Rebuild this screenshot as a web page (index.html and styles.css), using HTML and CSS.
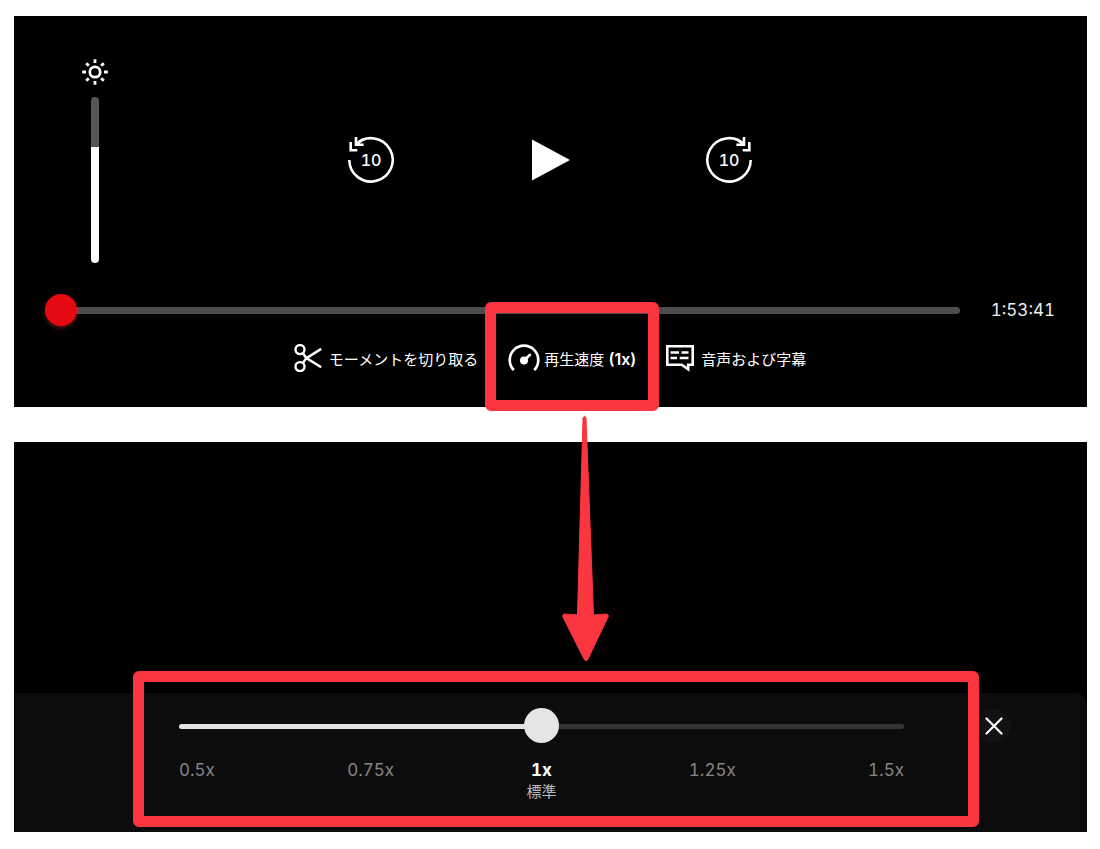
FILE: index.html
```html
<!DOCTYPE html>
<html lang="ja">
<head>
  <meta charset="UTF-8">
  <meta name="viewport" content="width=device-width, initial-scale=1.0">
  <title>再生速度</title>
  <link rel="stylesheet" href="styles.css">
</head>
<body>
  <section class="screen player">
    <div class="stage">
      <div class="brightness">
        <svg class="icon" width="28" height="28" viewBox="0 0 28 28" aria-hidden="true">
          <circle cx="14" cy="14" r="5.2" stroke-width="2.7"/>
          <path d="M14 1.2v3.8M14 23v3.8M1.2 14H5M23 14h3.8M5.2 5.2l2.6 2.6M20.2 20.2l2.6 2.6M22.8 5.2l-2.6 2.6M7.8 20.2l-2.6 2.6" stroke-width="2.8"/>
        </svg>
        <input class="brightness-range" type="range" min="0" max="100" value="70" aria-label="明るさ">
      </div>

      <div class="transport">
        <button class="skip" type="button">
          <svg class="icon" width="48" height="48" viewBox="0 0 48 48" aria-hidden="true">
            <path d="M2.3 24A21.7 21.7 0 1 0 9 8.2" stroke-width="2.6"/>
            <path d="M9 1v7.8h7.6M3.7 6v8.2h6.6M9 8.8L14.5 4.5" stroke-width="2.6"/>
          </svg>
          <span>10</span>
        </button>
        <button class="play" type="button" aria-label="再生">
          <svg width="40" height="42" viewBox="0 0 40 42" aria-hidden="true">
            <path d="M2 .5L40 21L2 41.5z" fill="#fff"/>
          </svg>
        </button>
        <button class="skip" type="button">
          <svg class="icon" width="48" height="48" viewBox="0 0 48 48" aria-hidden="true">
            <path d="M45.7 24A21.7 21.7 0 1 1 39 8.2" stroke-width="2.6"/>
            <path d="M39 1v7.8h-7.6M44.3 6v8.2h-6.6M39 8.8L33.5 4.5" stroke-width="2.6"/>
          </svg>
          <span>10</span>
        </button>
      </div>
    </div>

    <div class="timeline">
      <input class="seek" type="range" min="0" max="6821" value="0" aria-label="再生位置">
      <span class="time">1:53:41</span>
    </div>

    <div class="actions">
      <button class="action" type="button">
        <svg class="icon" width="28" height="28" viewBox="0 0 28 28" aria-hidden="true">
          <circle cx="6" cy="5.6" r="4.5" stroke-width="2.4"/>
          <circle cx="6" cy="22.6" r="4.5" stroke-width="2.4"/>
          <path d="M8.8 9.2L12.4 14.1L27.2 23.2M8.8 19L12.4 14.1L27.2 4.9" stroke-width="2.5"/>
        </svg>
        <span>モーメントを切り取る</span>
      </button>

      <button class="action speed" type="button">
        <svg class="icon" width="32" height="28" viewBox="0 0 32 28" aria-hidden="true">
          <path d="M5.8 26A14.3 14.3 0 1 1 26.2 26" stroke-width="2.7"/>
          <path d="M16 16.5L22 10.8" stroke-width="2.6" stroke-linecap="round"/>
          <circle cx="16" cy="16.5" r="4" fill="#fff" stroke="none"/>
        </svg>
        <span>再生速度 <b>(1x)</b></span>
        <span class="marker marker-speed"></span>
        <svg class="arrow" width="48" height="248" viewBox="0 0 48 248" aria-hidden="true">
          <path d="M21 3Q22.5 -.5 24 3L31.5 200L44.5 199Q47 199.5 46 202L26 244Q24 247.5 22 244L1 202Q0 199.5 2.5 199L15.5 200z" fill="#fb3640" stroke="#fb3640" stroke-width="1"/>
        </svg>
      </button>

      <button class="action" type="button">
        <svg class="icon" width="28" height="28" viewBox="0 0 28 28" aria-hidden="true">
          <path d="M1.3 2.3h25.4v18.5h-4.5v4.5l-6.5-4.5H1.3z" stroke-width="2.6"/>
          <path d="M4.5 8.5h8.5M15.500 8.500h7M4.500 14h6.500M13.700 14h8.800" stroke-width="2.4"/>
        </svg>
        <span>音声および字幕</span>
      </button>
    </div>
  </section>

  <section class="screen picker-screen">
    <div class="sheet">
      <div class="picker">
        <input class="speed-range" type="range" min="0.5" max="1.5" step="0.25" value="1" aria-label="再生速度">
        <div class="steps">
          <span>0.5x</span>
          <span>0.75x</span>
          <span class="current"><b>1x</b><small>標準</small></span>
          <span>1.25x</span>
          <span>1.5x</span>
        </div>
        <span class="marker marker-picker"></span>
      </div>
      <button class="close" type="button" aria-label="閉じる">
        <svg class="icon" width="18" height="18" viewBox="0 0 18 18" aria-hidden="true">
          <path d="M1.5 1.5l15 15M16.5 1.5l-15 15" stroke-width="2.2" stroke-linecap="round"/>
        </svg>
      </button>
    </div>
  </section>
</body>
</html>
```
FILE: styles.css
```css
* {
  box-sizing: border-box;
}
body {
  margin: 0;
  padding: 16px 13px 16px 14px;
  display: flex;
  flex-direction: column;
  gap: 35px;
  background: #fff;
  color: #fff;
  font-family: Inter, "Noto Sans CJK JP", sans-serif;
}
button {
  padding: 0;
  border: none;
  background: none;
  color: inherit;
  font: inherit;
  cursor: pointer;
}
svg {
  display: block;
  flex: none;
}
.icon {
  fill: none;
  stroke: #fff;
}
.screen {
  background: #000;
}

/* player */
.player {
  padding: 42px 32px 33px 31px;
  display: flex;
  flex-direction: column;
}
.stage {
  display: grid;
  grid-template-columns: 1fr auto 1fr;
  align-items: center;
}
.brightness {
  width: 28px;
  margin-left: 36px;
  display: flex;
  flex-direction: column;
  align-items: center;
  gap: 11px;
}
.brightness-range {
  appearance: none;
  writing-mode: vertical-lr;
  direction: rtl;
  width: 8px;
  height: 166px;
  margin: 0;
  border-radius: 4px;
  background: linear-gradient(#555 30%, #fff 30%);
}
.brightness-range::-webkit-slider-thumb {
  appearance: none;
  width: 8px;
  height: 8px;
  opacity: 0;
}
.transport {
  margin-bottom: 2px;
  display: flex;
  align-items: center;
  gap: 135px;
}
.skip {
  display: grid;
  place-items: center;
  font-size: 16px;
  font-weight: 500;
  font-variant-numeric: tabular-nums;
}
.skip > * {
  grid-area: 1 / 1;
}

/* seek bar */
.timeline {
  margin-top: 31px;
  display: flex;
  align-items: center;
  gap: 31px;
}
input[type="range"] {
  cursor: pointer;
}
.seek {
  appearance: none;
  flex: 1;
  min-width: 0;
  height: 32px;
  margin: 0;
  background: none;
}
.seek::-webkit-slider-runnable-track {
  height: 7px;
  border-radius: 4px;
  background: #4d4d4d;
}
.seek::-webkit-slider-thumb {
  appearance: none;
  width: 32px;
  height: 32px;
  margin-top: -13px;
  border-radius: 50%;
  background: #e50914;
  box-shadow: 0 2px 4px rgba(229, 60, 40, 0.4);
}
.time {
  font-size: 17px;
  font-variant-numeric: tabular-nums;
  color: #eee;
}

/* bottom actions */
.actions {
  margin-top: 16px;
  display: flex;
  justify-content: center;
  gap: 30px;
}
.action {
  height: 32px;
  display: flex;
  align-items: center;
  gap: 7px;
  font-size: 15px;
  white-space: nowrap;
}
.action b {
  font-size: 16px;
  font-weight: 600;
}
.speed {
  position: relative;
  gap: 4px;
}

/* red annotations */
.marker {
  position: absolute;
  border: 11px solid #fb3640;
  border-radius: 6px;
  pointer-events: none;
}
.marker-speed {
  inset: -40px -23px -37px;
}
.arrow {
  position: absolute;
  top: 73px;
  left: 54px;
  z-index: 1;
  pointer-events: none;
}

/* speed picker */
.picker-screen {
  min-height: 390px;
  display: flex;
  flex-direction: column;
  justify-content: flex-end;
}
.sheet {
  min-height: 139px;
  padding: 16px 76px 0 165px;
  display: flex;
  align-items: flex-start;
  gap: 73px;
  border-top-right-radius: 12px;
  background: #0c0c0c;
}
.picker {
  position: relative;
  flex: 1;
}
.speed-range {
  appearance: none;
  display: block;
  width: 100%;
  height: 35px;
  margin: 0;
  background: none;
}
.speed-range::-webkit-slider-runnable-track {
  height: 5px;
  border-radius: 3px;
  background: linear-gradient(to right, #e5e5e5 50%, #333338 50%);
}
.speed-range::-webkit-slider-thumb {
  appearance: none;
  width: 35px;
  height: 35px;
  margin-top: -16px;
  border-radius: 50%;
  background: #e5e5e5;
}
.steps {
  margin-top: 16px;
  display: flex;
  justify-content: space-between;
  font-size: 17px;
  line-height: 21px;
  font-variant-numeric: tabular-nums;
  color: #868686;
}
.current {
  display: flex;
  flex-direction: column;
  align-items: center;
  color: #fff;
}
.current small {
  font-size: 15px;
  color: #bbb;
}
.marker-picker {
  inset: -38px -75px -25px -46px;
}
.close {
  width: 34px;
  height: 34px;
  display: grid;
  place-items: center;
  border-radius: 50%;
  background: #121212;
}
```
